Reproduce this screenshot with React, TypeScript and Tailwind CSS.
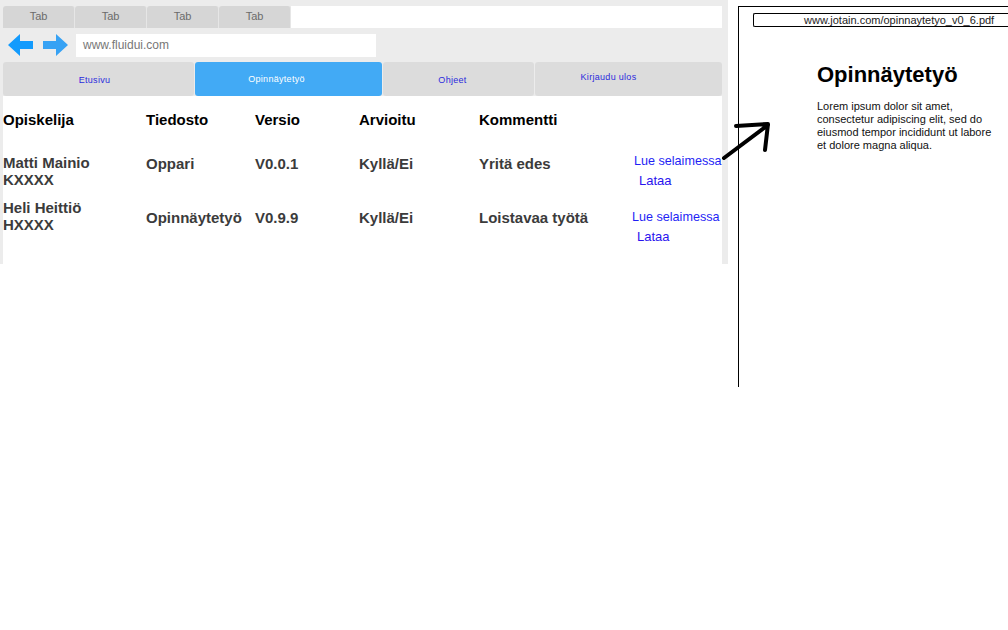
import { ReactNode } from 'react';

const font = { fontFamily: '"Liberation Sans", Arial, sans-serif' };

const ArrowLeft = ({ color }: { color: string }) => (
  <svg width="25" height="22" viewBox="0 0 25 22">
    <path d="M0 11 L12 0 L12 7 L25 7 L25 15 L12 15 L12 22 Z" fill={color} />
  </svg>
);

const ArrowRight = ({ color }: { color: string }) => (
  <svg width="25" height="22" viewBox="0 0 25 22">
    <path d="M25 11 L13 0 L13 7 L0 7 L0 15 L13 15 L13 22 Z" fill={color} />
  </svg>
);

const MenuItem = ({ w, active, children, pad }: { w: string; active?: boolean; children: ReactNode; pad: string }) => (
  <div
    className={`${w} h-full flex items-center justify-center rounded-[3px] text-[9px] tracking-[0.3px] ${
      active ? 'bg-[#42aaf5] text-white' : 'bg-[#dcdcdc] text-[#2b2bdd]'
    } ${pad}`}
  >
    {children}
  </div>
);

const rows = [
  {
    name: ['Matti Mainio', 'KXXXX'],
    file: 'Oppari',
    version: 'V0.0.1',
    grade: 'Kyllä/Ei',
    comment: 'Yritä edes',
    pad: 'pt-[1px]',
    linkPad: '-mt-[3px] ml-[5px]',
  },
  {
    name: ['Heli Heittiö', 'HXXXX'],
    file: 'Opinnäytetyö',
    version: 'V0.9.9',
    grade: 'Kyllä/Ei',
    comment: 'Loistavaa työtä',
    pad: 'pt-[10px]',
    linkPad: 'pt-[8px] ml-[3px]',
  },
];

export default function App() {
  return (
    <div className="relative w-[1008px] h-[630px] bg-white overflow-hidden" style={font}>
      <div className="flex items-start">
        {/* browser mockup */}
        <div className="w-[728px] h-[264px] shrink-0 bg-[#ececec] pt-[6px] pl-[3px] pr-[6px] flex flex-col">
          <div className="h-[22px] flex">
            {[0, 1, 2, 3].map((i) => (
              <div
                key={i}
                className="w-[72px] h-full bg-[#d6d6d6] rounded-t-[3px] border-r border-[#e6e6e6] flex items-center justify-center pb-[2px] text-[11px] text-[#6b6b6b]"
              >
                Tab
              </div>
            ))}
            <div className="flex-1 bg-white" />
          </div>

          <div className="h-[34px] flex items-center">
            <div className="ml-[5px]">
              <ArrowLeft color="#139bfd" />
            </div>
            <div className="ml-[10px]">
              <ArrowRight color="#37a2f4" />
            </div>
            <div className="ml-[8px] w-[300px] h-[23px] bg-white flex items-center pl-[7px] text-[12px] text-[#777]">
              www.fluidui.com
            </div>
          </div>

          <div className="h-[34px] flex gap-px">
            <MenuItem w="w-[191px]" pad="pr-[8px] pt-[3px]">
              Etusivu
            </MenuItem>
            <MenuItem w="w-[187px]" active pad="pr-[24px] pt-[1px]">
              Opinnäytetyö
            </MenuItem>
            <MenuItem w="w-[151px]" pad="pr-[12px] pt-[3px]">
              Ohjeet
            </MenuItem>
            <MenuItem w="flex-1" pad="pr-[40px] pb-[2px]">
              Kirjaudu ulos
            </MenuItem>
          </div>

          <div className="flex-1 bg-white pt-[15px]">
            <div className="flex font-bold text-[15px] leading-[17px] text-black">
              <div className="w-[143px] shrink-0">Opiskelija</div>
              <div className="w-[109px] shrink-0">Tiedosto</div>
              <div className="w-[104px] shrink-0">Versio</div>
              <div className="w-[120px] shrink-0">Arvioitu</div>
              <div className="w-[152px] shrink-0">Kommentti</div>
            </div>

            <div className="mt-[26px]">
              {rows.map((r) => (
                <div key={r.file} className="flex h-[45px] text-[15px] leading-[17px]">
                  <div className="w-[143px] shrink-0 font-bold text-[#3b3b3b]">
                    <div>{r.name[0]}</div>
                    <div>{r.name[1]}</div>
                  </div>
                  <div className={`w-[109px] shrink-0 font-bold text-[#3b3b3b] ${r.pad}`}>{r.file}</div>
                  <div className={`w-[104px] shrink-0 font-bold text-[#3b3b3b] ${r.pad}`}>{r.version}</div>
                  <div className={`w-[120px] shrink-0 font-bold text-[#3b3b3b] ${r.pad}`}>{r.grade}</div>
                  <div className={`w-[150px] shrink-0 font-bold text-[#3b3b3b] ${r.pad}`}>{r.comment}</div>
                  <div className={`shrink-0 text-[12.6px] leading-[20px] text-[#1f1ff5] ${r.linkPad}`}>
                    <div className="whitespace-nowrap">Lue selaimessa</div>
                    <div className="ml-[5px] text-[13px] text-[#2a14ee]">Lataa</div>
                  </div>
                </div>
              ))}
            </div>
          </div>
        </div>

        {/* pdf preview */}
        <div className="ml-[10px] mt-[6px] flex-1 h-[381px] border-l border-t border-black pt-[6px]">
          <div className="ml-[14px] h-[14px] border border-r-0 border-black rounded-l-[2px] pl-[50px] text-[11px] leading-[12px] text-[#222] whitespace-nowrap">
            www.jotain.com/opinnaytetyo_v0_6.pdf
          </div>
          <div className="pl-[78px] pt-[35px]">
            <div className="font-bold text-[22px] leading-[26px] text-black">Opinnäytetyö</div>
            <div className="mt-[12px] text-[11px] leading-[13px] text-[#111]">
              <div>Lorem ipsum dolor sit amet,</div>
              <div>consectetur adipiscing elit, sed do</div>
              <div>eiusmod tempor incididunt ut labore</div>
              <div>et dolore magna aliqua.</div>
            </div>
          </div>
        </div>
      </div>

      {/* hand drawn arrow over the gap */}
      <svg className="absolute left-0 top-0 pointer-events-none" width="1008" height="630">
        <path
          d="M724 158 L768 125 M736 126 L768 124 L765 150"
          stroke="#000"
          strokeWidth="4"
          strokeLinecap="round"
          strokeLinejoin="round"
          fill="none"
        />
      </svg>
    </div>
  );
}
